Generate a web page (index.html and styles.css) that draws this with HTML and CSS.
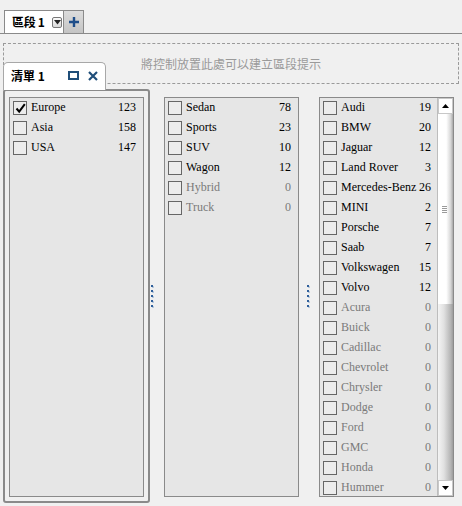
FILE: index.html
```html
<!DOCTYPE html>
<html>
<head>
<meta charset="utf-8">
<link rel="stylesheet" href="styles.css">
</head>
<body>
<div class="page">
  <div class="topbar">
    <div class="section-tab">
      <span class="section-label">區段 1</span>
      <span class="dd-btn"><svg width="7" height="5" viewBox="0 0 7 5"><path d="M0 0H7L3.5 4.5Z" fill="#222"/></svg></span>
    </div>
    <div class="plus-btn"><svg width="12" height="12" viewBox="0 0 12 12"><path d="M6 1V11M1 6H11" stroke="#1f4e8a" stroke-width="2.4"/></svg></div>
  </div>
  <div class="drop-zone">將控制放置此處可以建立區段提示</div>
  <div class="list-tab">
    <span class="list-tab-label">清單 1</span>
    <span class="tab-icons">
      <svg class="ic-max" width="11" height="9" viewBox="0 0 11 9"><rect x="1" y="1" width="9" height="7" fill="none" stroke="#1f4e79" stroke-width="2"/></svg>
      <svg class="ic-x" width="10" height="10" viewBox="0 0 10 10"><path d="M1 1L9 9M9 1L1 9" stroke="#1f4e79" stroke-width="2.2"/></svg>
    </span>
  </div>
  <div class="content">
    <div class="panel-selected">
      <div class="listbox">
        <div class="row"><span class="cb checked"><svg width="11" height="11" viewBox="0 0 11 11"><path d="M1.5 5.5L4.2 8.6L9.8 1.2" fill="none" stroke="#000" stroke-width="2"/></svg></span><span class="lbl">Europe</span><span class="num">123</span></div>
        <div class="row"><span class="cb"></span><span class="lbl">Asia</span><span class="num">158</span></div>
        <div class="row"><span class="cb"></span><span class="lbl">USA</span><span class="num">147</span></div>
      </div>
    </div>
    <div class="splitter s1"><span class="dots"><i></i><i></i><i></i><i></i><i></i></span></div>
    <div class="col">
      <div class="listbox">
        <div class="row"><span class="cb"></span><span class="lbl">Sedan</span><span class="num">78</span></div>
        <div class="row"><span class="cb"></span><span class="lbl">Sports</span><span class="num">23</span></div>
        <div class="row"><span class="cb"></span><span class="lbl">SUV</span><span class="num">10</span></div>
        <div class="row"><span class="cb"></span><span class="lbl">Wagon</span><span class="num">12</span></div>
        <div class="row dim"><span class="cb"></span><span class="lbl">Hybrid</span><span class="num">0</span></div>
        <div class="row dim"><span class="cb"></span><span class="lbl">Truck</span><span class="num">0</span></div>
      </div>
    </div>
    <div class="splitter s2"><span class="dots"><i></i><i></i><i></i><i></i><i></i></span></div>
    <div class="col">
      <div class="listbox scrolling">
        <div class="rows">
          <div class="row"><span class="cb"></span><span class="lbl">Audi</span><span class="num">19</span></div>
          <div class="row"><span class="cb"></span><span class="lbl">BMW</span><span class="num">20</span></div>
          <div class="row"><span class="cb"></span><span class="lbl">Jaguar</span><span class="num">12</span></div>
          <div class="row"><span class="cb"></span><span class="lbl">Land Rover</span><span class="num">3</span></div>
          <div class="row"><span class="cb"></span><span class="lbl">Mercedes-Benz</span><span class="num">26</span></div>
          <div class="row"><span class="cb"></span><span class="lbl">MINI</span><span class="num">2</span></div>
          <div class="row"><span class="cb"></span><span class="lbl">Porsche</span><span class="num">7</span></div>
          <div class="row"><span class="cb"></span><span class="lbl">Saab</span><span class="num">7</span></div>
          <div class="row"><span class="cb"></span><span class="lbl">Volkswagen</span><span class="num">15</span></div>
          <div class="row"><span class="cb"></span><span class="lbl">Volvo</span><span class="num">12</span></div>
          <div class="row dim"><span class="cb"></span><span class="lbl">Acura</span><span class="num">0</span></div>
          <div class="row dim"><span class="cb"></span><span class="lbl">Buick</span><span class="num">0</span></div>
          <div class="row dim"><span class="cb"></span><span class="lbl">Cadillac</span><span class="num">0</span></div>
          <div class="row dim"><span class="cb"></span><span class="lbl">Chevrolet</span><span class="num">0</span></div>
          <div class="row dim"><span class="cb"></span><span class="lbl">Chrysler</span><span class="num">0</span></div>
          <div class="row dim"><span class="cb"></span><span class="lbl">Dodge</span><span class="num">0</span></div>
          <div class="row dim"><span class="cb"></span><span class="lbl">Ford</span><span class="num">0</span></div>
          <div class="row dim"><span class="cb"></span><span class="lbl">GMC</span><span class="num">0</span></div>
          <div class="row dim"><span class="cb"></span><span class="lbl">Honda</span><span class="num">0</span></div>
          <div class="row dim"><span class="cb"></span><span class="lbl">Hummer</span><span class="num">0</span></div>
        </div>
        <div class="scrollbar">
          <div class="sb-btn"><svg width="7" height="4" viewBox="0 0 7 4"><path d="M0 4H7L3.5 0Z" fill="#000"/></svg></div>
          <div class="sb-thumb"><span class="grip"><i></i><i></i><i></i><i></i></span></div>
          <div class="sb-track"></div>
          <div class="sb-btn"><svg width="7" height="4" viewBox="0 0 7 4"><path d="M0 0H7L3.5 4Z" fill="#000"/></svg></div>
        </div>
      </div>
    </div>
  </div>
</div>
</body>
</html>
```

FILE: styles.css
```css
* { box-sizing: border-box; }
html, body { margin: 0; padding: 0; }
body {
  width: 462px;
  height: 506px;
  background: #f0f0f0;
  overflow: hidden;
  font-family: "Liberation Serif", "Noto Sans CJK TC", serif;
  font-size: 12px;
  color: #000;
}
.page { position: relative; width: 462px; height: 506px; }

.topbar {
  display: flex;
  padding: 10px 0 0 4px;
  height: 34px;
  border-bottom: 1px solid #8a8a8a;
}
.section-tab {
  display: flex;
  align-items: center;
  width: 60px;
  height: 23px;
  background: #fff;
  border: 1px solid #8a8a8a;
  border-bottom: none;
  padding-left: 7px;
}
.section-label {
  font-family: "Noto Sans CJK TC", sans-serif;
  font-weight: bold;
  font-size: 12px;
  line-height: 14px;
  width: 40px;
  letter-spacing: -0.3px;
}
.dd-btn {
  display: flex;
  align-items: center;
  justify-content: center;
  width: 10px;
  height: 11px;
  border: 1px solid #777;
  border-radius: 2px;
  background: linear-gradient(#fafafa, #d8d8d8);
}
.plus-btn {
  display: flex;
  align-items: center;
  justify-content: center;
  width: 20px;
  height: 23px;
  border: 1px solid #8a8a8a;
  border-left: none;
  border-bottom: none;
  background: linear-gradient(#dcdcdc, #c4c4c4);
}

.drop-zone {
  margin: 9px 3px 0 3px;
  height: 41px;
  border: 1px dashed #9a9a9a;
  display: flex;
  align-items: center;
  justify-content: center;
  font-family: "Noto Sans CJK TC", sans-serif;
  font-size: 12px;
  color: #9a9a9a;
}

.list-tab {
  position: absolute;
  left: 3px;
  top: 62px;
  width: 103px;
  height: 28px;
  background: #fff;
  border: 1px solid #a8a8a8;
  border-bottom: none;
  border-radius: 5px 5px 0 0;
  display: flex;
  align-items: center;
  padding: 0 0 2px 7px;
  z-index: 2;
}
.list-tab-label {
  font-family: "Noto Sans CJK TC", sans-serif;
  font-weight: bold;
  font-size: 12px;
  width: 57px;
}
.tab-icons { display: flex; align-items: center; gap: 9px; }

.content {
  position: absolute;
  left: 3px;
  top: 89px;
  display: flex;
  align-items: flex-start;
}
.panel-selected {
  width: 147px;
  height: 414px;
  border: 2px solid #8a8a8a;
  border-radius: 3px;
  padding: 6px 4px 0 4px;
  background: #f0f0f0;
}
.listbox {
  width: 135px;
  height: 400px;
  border: 1px solid #8a8a8a;
  background: #e6e6e6;
}
.col { padding-top: 8px; }
.splitter { height: 414px; display: flex; align-items: flex-start; padding-top: 196px; }
.s1 { width: 14px; padding-left: 1px; }
.s2 { width: 20px; padding-left: 8px; }
.dots { display: flex; flex-direction: column; gap: 3px; }
.dots i {
  display: block;
  width: 2px;
  height: 2px;
  background: #2f5f9a;
  box-shadow: 1px 1px 0 #b9c9dc;
}

.row {
  display: flex;
  align-items: center;
  height: 20px;
  padding: 0 7px 2px 3px;
  white-space: nowrap;
}
.cb {
  width: 14px;
  height: 14px;
  border: 1px solid #666;
  background: #ececec;
  margin-right: 4px;
  margin-top: 2px;
  flex: none;
  display: flex;
  align-items: center;
  justify-content: center;
}
.lbl { flex: 1; }
.num { text-align: right; }
.dim { color: #7a7a7a; }

.scrolling { display: flex; }
.rows { width: 117px; flex: none; }
.scrolling .row { padding-right: 6px; }
.scrollbar {
  width: 16px;
  height: 398px;
  display: flex;
  flex-direction: column;
  border-left: 1px solid #bdbdbd;
}
.sb-btn {
  height: 16px;
  background: #fff;
  border: 1px solid #c8c8c8;
  display: flex;
  align-items: center;
  justify-content: center;
  flex: none;
}
.sb-thumb {
  height: 190px;
  background: linear-gradient(to right, #ffffff 0%, #ffffff 55%, #d6d6d6 85%, #a8a8a8 100%);
  display: flex;
  align-items: center;
  justify-content: center;
  padding-right: 3px;
  flex: none;
}
.grip { display: flex; flex-direction: column; gap: 1px; }
.grip i { display: block; width: 5px; height: 1px; background: #9a9a9a; }
.sb-track {
  flex: 1;
  background: linear-gradient(to right, #f4f4f4 0%, #e0e0e0 40%, #b4b4b4 85%, #9c9c9c 100%);
}
```
